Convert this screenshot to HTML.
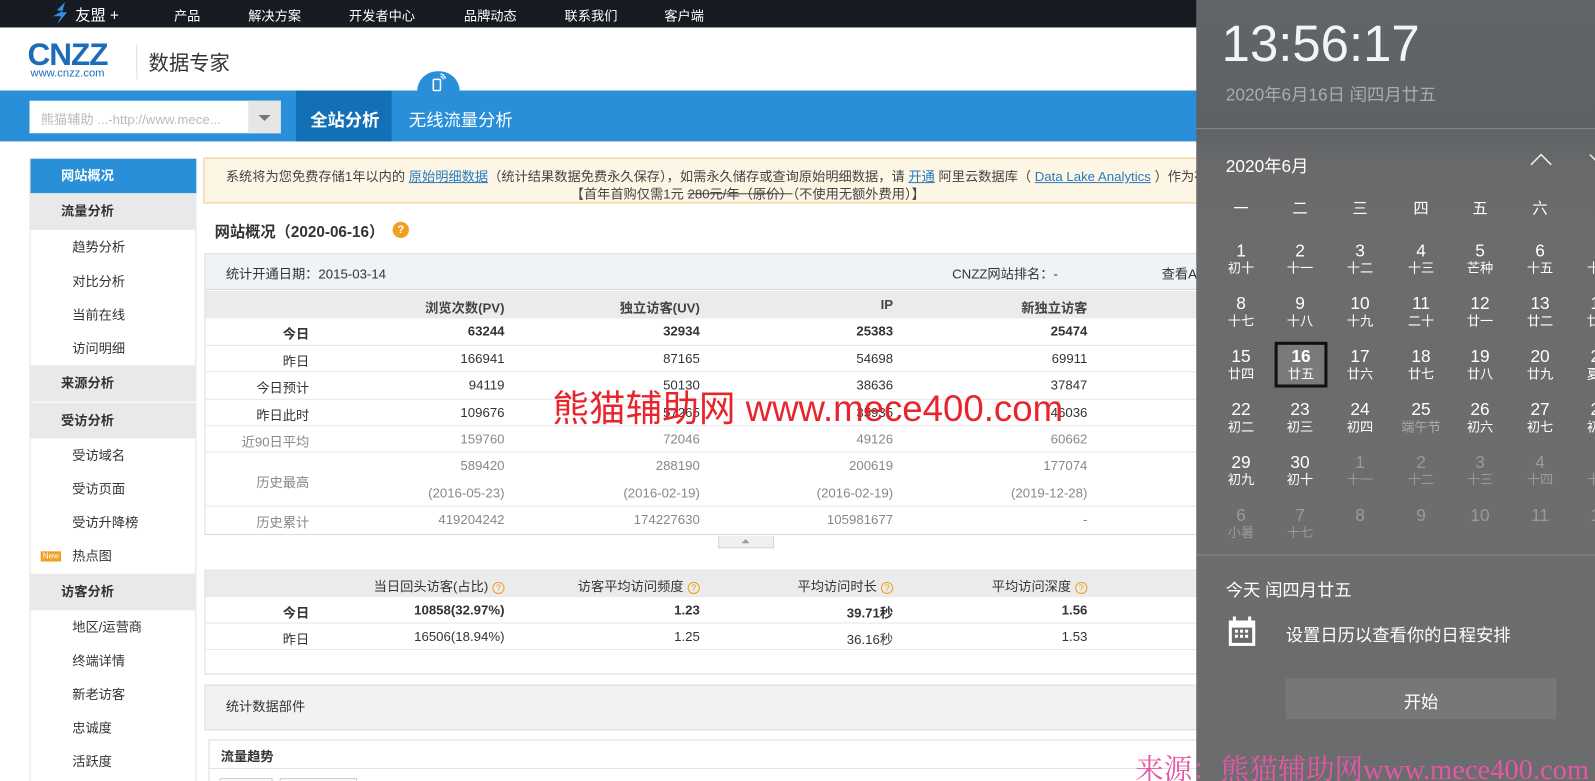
<!DOCTYPE html>
<html><head><meta charset="utf-8">
<style>
*{margin:0;padding:0;box-sizing:border-box}
body{width:1595px;height:781px;overflow:hidden;position:relative;background:#fff;font-family:"Liberation Sans","Microsoft YaHei","Noto Sans CJK SC",sans-serif;font-size:13px;color:#333}
#w{position:absolute;left:0;top:0;width:1568px;height:768px;transform:scale(1.01722);transform-origin:0 0;overflow:hidden}
.a{position:absolute;white-space:nowrap}
.top{left:0;top:0;width:1568px;height:27px;background:#161a21}
.top span{position:absolute;top:5px;color:#fff;font-size:13px}
.band{left:0;top:89px;width:1568px;height:50px;background:#2a8fd9}
.side{left:29px;top:156px;width:164px;height:625px;border:1px solid #e3e3e3;border-top:none}
.si{position:absolute;left:0;width:163px;font-size:13px;color:#333}
.g{background:#e9e9e9;font-weight:bold;padding-left:30px;height:36px;line-height:36px}
.s{padding-left:41px;height:20px;line-height:20px}
.row{position:absolute;left:201px;width:975px;border-bottom:1px solid #e6e6e6}
.c{position:absolute;text-align:right}
.cal{left:1176px;top:0;width:419px;height:781px;background:linear-gradient(180deg,#616468 0%,#5e6266 16%,#6b6b6b 22%,#6d6d6d 60%,#6a6c6e 100%)}
.d{position:absolute;width:50px;text-align:center;color:#fff;line-height:17px}
.d b{display:block;font-weight:normal;font-size:17px}
.d i{display:block;font-style:normal;font-size:13px}
.d.f{color:#9a9a9a}
.q{display:inline-block;width:12px;height:12px;border:1px solid #f0a020;border-radius:50%;color:#f0a020;font-size:9px;line-height:10px;text-align:center;vertical-align:middle;margin-left:4px}
</style></head><body><div id="w">

<div class="a top">
 <svg style="position:absolute;left:50px;top:2px" width="20" height="22" viewBox="0 0 20 22"><path d="M14 0 L6 8 L11 9 L2 14 L10 14 L6 22 L16 10 L11 10 Z" fill="#2f8fe0"/></svg>
 <span style="left:74px;font-size:15px;top:4px">友盟 +</span>
 <span style="left:171px">产品</span><span style="left:244px">解决方案</span><span style="left:343px">开发者中心</span><span style="left:456px">品牌动态</span><span style="left:555px">联系我们</span><span style="left:653px">客户端</span>
</div>

<div class="a" style="left:27px;top:40px;font-size:31px;font-weight:bold;color:#1c6cb8;letter-spacing:-1px;line-height:28px">CNZZ</div>
<div class="a" style="left:30px;top:66px;font-size:11px;color:#1c6cb8">www.cnzz.com</div>
<div class="a" style="left:134px;top:44px;width:1px;height:34px;background:#ddd"></div>
<div class="a" style="left:146px;top:46px;font-size:20px;color:#333">数据专家</div>

<div class="a band"></div>
<div class="a" style="left:410px;top:70px;width:42px;height:22px;background:#2a8fd9;border-radius:20px 20px 0 0"></div>
<svg class="a" style="left:423px;top:72px" width="16" height="18" viewBox="0 0 16 18"><rect x="3" y="6" width="7" height="11" rx="1" fill="none" stroke="#fff" stroke-width="1.5"/><path d="M10 3 a4 4 0 0 1 3 3 M10 0.5 a7 7 0 0 1 5 5" fill="none" stroke="#fff" stroke-width="1.2"/></svg>
<div class="a" style="left:29px;top:99px;width:247px;height:32px;background:#fff"></div>
<div class="a" style="left:40px;top:107px;color:#bbb;font-size:13px">熊猫辅助 ...-http://www.mece...</div>
<div class="a" style="left:244px;top:99px;width:32px;height:32px;background:#e6e6e6"></div>
<div class="a" style="left:254px;top:113px;border:6px solid transparent;border-top:6px solid #777;border-bottom:none"></div>
<div class="a" style="left:291px;top:89px;width:94px;height:50px;background:#136fb6"></div>
<div class="a" style="left:305px;top:104px;color:#fff;font-size:17px;font-weight:bold">全站分析</div>
<div class="a" style="left:402px;top:104px;color:#fff;font-size:17px">无线流量分析</div>

<div class="a side">
 <div class="si" style="top:0;height:34px;line-height:34px;background:#2a8fd9;color:#fff;font-weight:bold;padding-left:30px">网站概况</div>
 <div class="si g" style="top:34px">流量分析</div>
 <div class="si s" style="top:77px">趋势分析</div>
 <div class="si s" style="top:111px">对比分析</div>
 <div class="si s" style="top:144px">当前在线</div>
 <div class="si s" style="top:177px">访问明细</div>
 <div class="si g" style="top:203px">来源分析</div>
 <div class="si g" style="top:239px;border-top:1px solid #fff">受访分析</div>
 <div class="si s" style="top:282px">受访域名</div>
 <div class="si s" style="top:315px">受访页面</div>
 <div class="si s" style="top:348px">受访升降榜</div>
 <div class="si s" style="top:381px"><span style="position:absolute;left:10px;top:5px;background:#f0a020;color:#fff;font-size:8px;line-height:10px;padding:0 2px">New</span>热点图</div>
 <div class="si g" style="top:408px">访客分析</div>
 <div class="si s" style="top:451px">地区/运营商</div>
 <div class="si s" style="top:484px">终端详情</div>
 <div class="si s" style="top:517px">新老访客</div>
 <div class="si s" style="top:550px">忠诚度</div>
 <div class="si s" style="top:583px">活跃度</div>
</div>

<div class="a" style="left:200px;top:155px;width:990px;height:45px;background:#fdf6e5;border:1px solid #eccb84"></div>
<div class="a" style="left:222px;top:163px;font-size:13px;color:#444">系统将为您免费存储1年以内的 <u style="color:#2a7ac0">原始明细数据</u>（统计结果数据免费永久保存），如需永久储存或查询原始明细数据，请 <u style="color:#2a7ac0">开通</u> 阿里云数据库（ <u style="color:#2a7ac0">Data Lake Analytics</u> ）作为存储和</div>
<div class="a" style="left:561px;top:180px;font-size:13px;color:#444">【首年首购仅需1元 <s>280元/年（原价）</s>（不使用无额外费用）】</div>

<div class="a" style="left:211px;top:217px;font-size:15px;font-weight:bold;color:#333">网站概况（2020-06-16）</div>
<div class="a" style="left:386px;top:218px;width:16px;height:16px;border-radius:50%;background:#f0a020;color:#fff;font-size:11px;line-height:16px;text-align:center;font-weight:bold">?</div>

<div class="a" style="left:201px;top:249px;width:990px;height:277px;border:1px solid #dcdcdc"></div>
<div class="a" style="left:202px;top:250px;width:990px;height:35px;background:#eef3f6;border-bottom:1px solid #d5d5d5"></div>
<div class="a" style="left:222px;top:259px">统计开通日期：2015-03-14</div>
<div class="a" style="left:936px;top:259px">CNZZ网站排名：-</div>
<div class="a" style="left:1142px;top:259px">查看A</div>
<div class="a" style="left:202px;top:286px;width:990px;height:27px;background:#ebebeb"></div>
<div class="c" style="left:380px;width:116px;top:292px;font-weight:bold;color:#444">浏览次数(PV)</div>
<div class="c" style="left:560px;width:128px;top:292px;font-weight:bold;color:#444">独立访客(UV)</div>
<div class="c" style="left:800px;width:78px;top:292px;font-weight:bold;color:#444">IP</div>
<div class="c" style="left:960px;width:109px;top:292px;font-weight:bold;color:#444">新独立访客</div>

<div class="row" style="top:313px;height:27px"></div>
<div class="row" style="top:340px;height:26px"></div>
<div class="row" style="top:366px;height:27px"></div>
<div class="row" style="top:393px;height:26px"></div>
<div class="row" style="top:419px;height:26px"></div>
<div class="row" style="top:445px;height:53px"></div>

<div class="c" style="left:200px;width:104px;top:318px;font-weight:bold">今日</div>
<div class="c" style="left:380px;width:116px;top:318px;font-weight:bold">63244</div>
<div class="c" style="left:560px;width:128px;top:318px;font-weight:bold">32934</div>
<div class="c" style="left:780px;width:98px;top:318px;font-weight:bold">25383</div>
<div class="c" style="left:960px;width:109px;top:318px;font-weight:bold">25474</div>

<div class="c" style="left:200px;width:104px;top:345px">昨日</div>
<div class="c" style="left:380px;width:116px;top:345px">166941</div>
<div class="c" style="left:560px;width:128px;top:345px">87165</div>
<div class="c" style="left:780px;width:98px;top:345px">54698</div>
<div class="c" style="left:960px;width:109px;top:345px">69911</div>

<div class="c" style="left:200px;width:104px;top:371px">今日预计</div>
<div class="c" style="left:380px;width:116px;top:371px">94119</div>
<div class="c" style="left:560px;width:128px;top:371px">50130</div>
<div class="c" style="left:780px;width:98px;top:371px">38636</div>
<div class="c" style="left:960px;width:109px;top:371px">37847</div>

<div class="c" style="left:200px;width:104px;top:398px">昨日此时</div>
<div class="c" style="left:380px;width:116px;top:398px">109676</div>
<div class="c" style="left:560px;width:128px;top:398px">57265</div>
<div class="c" style="left:780px;width:98px;top:398px">35935</div>
<div class="c" style="left:960px;width:109px;top:398px">46036</div>

<div style="color:#888">
<div class="c" style="left:200px;width:104px;top:424px">近90日平均</div>
<div class="c" style="left:380px;width:116px;top:424px">159760</div>
<div class="c" style="left:560px;width:128px;top:424px">72046</div>
<div class="c" style="left:780px;width:98px;top:424px">49126</div>
<div class="c" style="left:960px;width:109px;top:424px">60662</div>

<div class="c" style="left:200px;width:104px;top:464px">历史最高</div>
<div class="c" style="left:380px;width:116px;top:450px">589420</div>
<div class="c" style="left:560px;width:128px;top:450px">288190</div>
<div class="c" style="left:780px;width:98px;top:450px">200619</div>
<div class="c" style="left:960px;width:109px;top:450px">177074</div>
<div class="c" style="left:380px;width:116px;top:477px">(2016-05-23)</div>
<div class="c" style="left:560px;width:128px;top:477px">(2016-02-19)</div>
<div class="c" style="left:780px;width:98px;top:477px">(2016-02-19)</div>
<div class="c" style="left:960px;width:109px;top:477px">(2019-12-28)</div>

<div class="c" style="left:200px;width:104px;top:503px">历史累计</div>
<div class="c" style="left:380px;width:116px;top:503px">419204242</div>
<div class="c" style="left:560px;width:128px;top:503px">174227630</div>
<div class="c" style="left:780px;width:98px;top:503px">105981677</div>
<div class="c" style="left:960px;width:109px;top:503px">-</div>
</div>
<div class="a" style="left:706px;top:527px;width:55px;height:12px;background:#f0f0f0;border:1px solid #d5d5d5;border-top:none"></div>
<div class="a" style="left:729px;top:530px;border:4px solid transparent;border-bottom:4px solid #999;border-top:none"></div>

<div class="a" style="left:543px;top:373px;font-size:36px;color:#e8242c">熊猫辅助网 www.mece400.com</div>

<div class="a" style="left:201px;top:560px;width:990px;height:103px;border:1px solid #dcdcdc"></div>
<div class="a" style="left:202px;top:561px;width:990px;height:26px;background:#ebebeb"></div>
<div class="c" style="left:300px;width:196px;top:566px">当日回头访客(占比)<span class="q">?</span></div>
<div class="c" style="left:520px;width:168px;top:566px">访客平均访问频度<span class="q">?</span></div>
<div class="c" style="left:720px;width:158px;top:566px">平均访问时长<span class="q">?</span></div>
<div class="c" style="left:900px;width:169px;top:566px">平均访问深度<span class="q">?</span></div>
<div class="row" style="top:587px;height:26px"></div>
<div class="row" style="top:613px;height:26px"></div>
<div class="c" style="left:200px;width:104px;top:592px;font-weight:bold">今日</div>
<div class="c" style="left:380px;width:116px;top:592px;font-weight:bold">10858(32.97%)</div>
<div class="c" style="left:560px;width:128px;top:592px;font-weight:bold">1.23</div>
<div class="c" style="left:780px;width:98px;top:592px;font-weight:bold">39.71秒</div>
<div class="c" style="left:960px;width:109px;top:592px;font-weight:bold">1.56</div>
<div class="c" style="left:200px;width:104px;top:618px">昨日</div>
<div class="c" style="left:380px;width:116px;top:618px">16506(18.94%)</div>
<div class="c" style="left:560px;width:128px;top:618px">1.25</div>
<div class="c" style="left:780px;width:98px;top:618px">36.16秒</div>
<div class="c" style="left:960px;width:109px;top:618px">1.53</div>

<div class="a" style="left:201px;top:673px;width:990px;height:45px;background:#f2f2f2;border:1px solid #dcdcdc"></div>
<div class="a" style="left:222px;top:684px">统计数据部件</div>
<div class="a" style="left:205px;top:727px;width:990px;height:60px;border:1px solid #dcdcdc"></div>
<div class="a" style="left:206px;top:755px;width:990px;height:1px;background:#e3e3e3"></div>
<div class="a" style="left:217px;top:733px;font-weight:bold">流量趋势</div>
<div class="a" style="left:216px;top:765px;width:52px;height:20px;border:1px solid #ccc"></div>
<div class="a" style="left:275px;top:765px;width:76px;height:20px;border:1px solid #ccc"></div>

<div class="a cal">
 <div class="a" style="left:25px;top:14px;font-size:50px;color:#f4f4f4;line-height:58px">13:56:17</div>
 <div class="a" style="left:29px;top:79px;font-size:17px;color:#a9acaf">2020年6月16日 闰四月廿五</div>
 <div class="a" style="left:0;top:126px;width:419px;height:1px;background:#888b8e"></div>
 <div class="a" style="left:29px;top:149px;font-size:17px;color:#fff">2020年6月</div>
 <svg class="a" style="left:328px;top:151px" width="22" height="12"><path d="M1 11 L11 1 L21 11" fill="none" stroke="#eee" stroke-width="1.5"/></svg>
 <svg class="a" style="left:386px;top:151px" width="22" height="12"><path d="M1 1 L11 11 L21 1" fill="none" stroke="#eee" stroke-width="1.5"/></svg>

 <div class="d" style="left:19px;top:197px;font-size:15px">一</div><div class="d" style="left:77px;top:197px;font-size:15px">二</div><div class="d" style="left:136px;top:197px;font-size:15px">三</div><div class="d" style="left:196px;top:197px;font-size:15px">四</div><div class="d" style="left:254px;top:197px;font-size:15px">五</div><div class="d" style="left:313px;top:197px;font-size:15px">六</div><div class="d" style="left:372px;top:197px;font-size:15px">日</div>

 <div class="d" style="left:19px;top:238px"><b>1</b><i>初十</i></div><div class="d" style="left:77px;top:238px"><b>2</b><i>十一</i></div><div class="d" style="left:136px;top:238px"><b>3</b><i>十二</i></div><div class="d" style="left:196px;top:238px"><b>4</b><i>十三</i></div><div class="d" style="left:254px;top:238px"><b>5</b><i>芒种</i></div><div class="d" style="left:313px;top:238px"><b>6</b><i>十五</i></div><div class="d" style="left:372px;top:238px"><b>7</b><i>十六</i></div>

 <div class="d" style="left:19px;top:290px"><b>8</b><i>十七</i></div><div class="d" style="left:77px;top:290px"><b>9</b><i>十八</i></div><div class="d" style="left:136px;top:290px"><b>10</b><i>十九</i></div><div class="d" style="left:196px;top:290px"><b>11</b><i>二十</i></div><div class="d" style="left:254px;top:290px"><b>12</b><i>廿一</i></div><div class="d" style="left:313px;top:290px"><b>13</b><i>廿二</i></div><div class="d" style="left:372px;top:290px"><b>14</b><i>廿三</i></div>

 <div class="a" style="left:77px;top:336px;width:52px;height:45px;border:3px solid #111;background:#7a7a7a"></div>
 <div class="d" style="left:19px;top:342px"><b>15</b><i>廿四</i></div><div class="d" style="left:78px;top:342px"><b style="font-weight:bold">16</b><i>廿五</i></div><div class="d" style="left:136px;top:342px"><b>17</b><i>廿六</i></div><div class="d" style="left:196px;top:342px"><b>18</b><i>廿七</i></div><div class="d" style="left:254px;top:342px"><b>19</b><i>廿八</i></div><div class="d" style="left:313px;top:342px"><b>20</b><i>廿九</i></div><div class="d" style="left:372px;top:342px"><b>21</b><i>夏至</i></div>

 <div class="d" style="left:19px;top:394px"><b>22</b><i>初二</i></div><div class="d" style="left:77px;top:394px"><b>23</b><i>初三</i></div><div class="d" style="left:136px;top:394px"><b>24</b><i>初四</i></div><div class="d" style="left:196px;top:394px"><b>25</b><i style="color:#aaa">端午节</i></div><div class="d" style="left:254px;top:394px"><b>26</b><i>初六</i></div><div class="d" style="left:313px;top:394px"><b>27</b><i>初七</i></div><div class="d" style="left:372px;top:394px"><b>28</b><i>初八</i></div>

 <div class="d" style="left:19px;top:446px"><b>29</b><i>初九</i></div><div class="d" style="left:77px;top:446px"><b>30</b><i>初十</i></div><div class="d f" style="left:136px;top:446px"><b>1</b><i>十一</i></div><div class="d f" style="left:196px;top:446px"><b>2</b><i>十二</i></div><div class="d f" style="left:254px;top:446px"><b>3</b><i>十三</i></div><div class="d f" style="left:313px;top:446px"><b>4</b><i>十四</i></div><div class="d f" style="left:372px;top:446px"><b>5</b><i>十五</i></div>

 <div class="d f" style="left:19px;top:498px"><b>6</b><i>小暑</i></div><div class="d f" style="left:77px;top:498px"><b>7</b><i>十七</i></div><div class="d f" style="left:136px;top:498px"><b>8</b></div><div class="d f" style="left:196px;top:498px"><b>9</b></div><div class="d f" style="left:254px;top:498px"><b>10</b></div><div class="d f" style="left:313px;top:498px"><b>11</b></div><div class="d f" style="left:372px;top:498px"><b>12</b></div>

 <div class="a" style="left:0;top:545px;width:419px;height:1px;background:#8a8a8a"></div>
 <div class="a" style="left:29px;top:566px;font-size:17px;color:#fff">今天 闰四月廿五</div>
 <svg class="a" style="left:31px;top:606px" width="28" height="30" viewBox="0 0 28 30"><rect x="1" y="4" width="26" height="25" fill="#fff"/><rect x="4" y="11" width="20" height="15" fill="#6b6b6b"/><rect x="5" y="0" width="3" height="6" fill="#fff"/><rect x="20" y="0" width="3" height="6" fill="#fff"/><g fill="#fff"><rect x="7" y="13" width="3" height="3"/><rect x="12" y="13" width="3" height="3"/><rect x="17" y="13" width="3" height="3"/><rect x="7" y="18" width="3" height="3"/><rect x="12" y="18" width="3" height="3"/><rect x="17" y="18" width="3" height="3"/></g></svg>
 <div class="a" style="left:88px;top:610px;font-size:17px;color:#fff">设置日历以查看你的日程安排</div>
 <div class="a" style="left:88px;top:667px;width:266px;height:40px;background:#777"></div>
 <div class="a" style="left:88px;top:676px;width:266px;text-align:center;font-size:17px;color:#fff">开始</div>
</div>

<div class="a" style="left:1116px;top:735px;font-size:28px;color:#e557a6;font-family:'Liberation Serif','Noto Serif CJK SC',serif">来源：熊猫辅助网www.mece400.com</div>
</div></body></html>
